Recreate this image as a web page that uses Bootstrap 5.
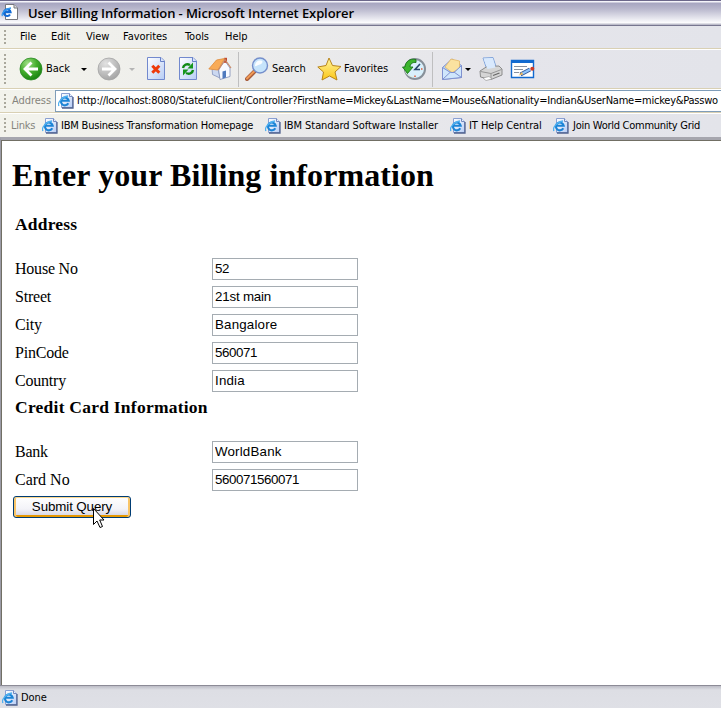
<!DOCTYPE html>
<html lang="en">
<head>
<meta charset="utf-8">
<meta name="viewport" content="width=device-width, initial-scale=1">
<title>User Billing Information - Microsoft Internet Explorer</title>
<link rel="stylesheet" href="https://cdn.jsdelivr.net/npm/bootstrap@5.3.0/dist/css/bootstrap.min.css">
<style>
  body { font: 11px/14px "DejaVu Sans Condensed", "DejaVu Sans", sans-serif; color: #000; letter-spacing: -.05px; background: #e4e5eb; }
  svg { display: block; flex: none; }
  .ie-title { height: 26px; padding-left: 1px; border-top: 1px solid #6b678a; border-bottom: 1px solid #77768f;
    background: linear-gradient(#f4f4fa 0 1px, #a6a5c0 2px, #b9b8cd 8px, #f8f8fb 21px, #fff 22px, #bdbdcb 23px); }
  .ie-title h2 { font: 600 13px/18px "Open Sans", sans-serif; letter-spacing: -.1px; padding: 3px 0 0 9px; }
  .ie-title svg { margin-top: 3px; }
  .ie-bar { background: linear-gradient(90deg, #f3f3ec, #e5e5eb 70%, #e3e4ea); white-space: nowrap; }
  .ie-bar > * { min-width: 0; }
  .ie-slots { display: grid; align-items: center; }
  .ie-menu { height: 23px; grid-template-columns: 20px 31px 35px 37px 62px 40px auto; border-bottom: 1px solid #d9d0b4; }
  .ie-tools { height: 40px; border-top: 1px solid #fff;
    grid-template-columns: 19px 27px 31px 20px 32px 17px 32px 30px 30px 7px 27px 45px 27px 58px 30px 9px 24px 14px 31px auto;
    border-bottom: 1px solid #d9d0b4; }
  .ie-address { height: 24px; border-top: 1px solid #fff; border-bottom: 1px solid #d9d0b4; grid-template-columns: 12px 43px minmax(0, 1fr); }
  .ie-links { height: 24px; border-top: 1px solid #fff; grid-template-columns: 11px 31px 19px 204px 19px 166px 19px 84px 20px auto; letter-spacing: -.2px; }
  .ie-tight { letter-spacing: -.27px; }
  .ie-loose { letter-spacing: -.07px; }
  .ie-grip { width: 2px; height: 15px; margin-left: 4px; background: repeating-linear-gradient(#aaa89c 0 2px, transparent 2px 4px); }
  .ie-tools .ie-grip { height: 31px; }
  .ie-sep { width: 1px; height: 35px; background: #bfbfc0; }
  .ie-caption { color: #85847c; }
  .ie-url { height: 22px; border: 1px solid #7f9db9; border-right: 0; background: #fff; letter-spacing: -.226px; padding-left: 2px; gap: 3px; }
  .ie-caret { width: 0; border: 3px solid transparent; border-top-color: #000; border-bottom: 0; }
  .ie-caret.ie-off { border-top-color: #b5b5b5; }
  .ie-frame { border-top: 3px solid #a6a6ae; border-left: 1px solid #9b9ba6; }
  .ie-view { height: 545px; border-top: 1px solid #716f64; border-left: 1px solid #716f64; background: #fff;
    font-family: "Liberation Serif", serif; font-size: 16px; line-height: 20px; letter-spacing: 0; padding: 17px 0 0 10px; }
  .ie-view h1 { font-size: 32px; line-height: 34px; font-weight: 700; letter-spacing: .09px; margin: 0 0 22px; }
  .ie-view h3 { font-size: 17.5px; line-height: 20px; font-weight: 700; letter-spacing: .2px; margin: 0 0 21px 3px; }
  .ie-view h3.ie-second { margin-top: 2px; letter-spacing: .24px; }
  .ie-row { height: 28px; padding-left: 3px; }
  .ie-row label { width: 197px; letter-spacing: -.22px; }
  .ie-row label.ie-even { letter-spacing: 0; }
  .ie-row input { width: 146px; height: 22px; border: 1px solid #a5acb2; border-radius: 0; padding: 0 2px 1px; color: #000;
    font: 13.333px "Liberation Sans", Arial, sans-serif; background: #fff; outline: 0; letter-spacing: .18px; }
  .ie-row input.ie-digits { letter-spacing: -.42px; }
  .ie-row input.ie-narrow { letter-spacing: -.2px; }
  .ie-submit { width: 118px; height: 22px; margin: 2px 0 0 1px; padding: 0 0 1px; border: 1px solid #003c74; border-radius: 3px;
    font: 13.333px/18px "Liberation Sans", Arial, sans-serif; letter-spacing: -.1px; color: #000;
    background: linear-gradient(#fff, #f3f3f8 60%, #cfcfe0);
    box-shadow: inset 0 1px #fdd98f, inset 2px 0 #f9c568, inset -2px 0 #f9c568, inset 0 -2px #e59700; }
  .ie-pointer { left: 80px; top: 11px; }
  .ie-status { height: 23px; border-top: 1px solid #8c8b96; padding: 2px 0 0 2px; gap: 3px;
    background: linear-gradient(#bcbcc6, #dddee4 4px, #dfe0e6); }
</style>
<script src="https://cdn.jsdelivr.net/npm/bootstrap@5.3.0/dist/js/bootstrap.bundle.min.js"></script>
</head>
<body class="vh-100 overflow-hidden d-flex flex-column">

<svg width="0" height="0" class="position-absolute" aria-hidden="true">
  <defs>
    <linearGradient id="paper" x1="0" y1="0" x2="1" y2="1"><stop offset="0" stop-color="#fff"/><stop offset="1" stop-color="#b7cdf5"/></linearGradient>
    <radialGradient id="green" cx=".35" cy=".25" r=".8"><stop offset="0" stop-color="#a0df86"/><stop offset=".5" stop-color="#45ae2d"/><stop offset="1" stop-color="#16800f"/></radialGradient>
    <radialGradient id="grey" cx=".35" cy=".25" r=".8"><stop offset="0" stop-color="#e2e2e2"/><stop offset="1" stop-color="#a3a3a3"/></radialGradient>
    <linearGradient id="gold" x1="0" y1="0" x2="0" y2="1"><stop offset="0" stop-color="#fff6a0"/><stop offset="1" stop-color="#fcc615"/></linearGradient>
    <symbol id="page-e" viewBox="0 0 16 16">
      <path d="M3.500.5H11.500L14.500 3.500V14.500H3.500Z" fill="url(#paper)" stroke="#8aa0d2"/>
      <path d="M15 4V15H4" fill="none" stroke="#50628f" stroke-width="1.300"/>
      <path d="M11.500.5V3.500H14.500" fill="#e8effc" stroke="#7589bd"/>
      <path d="M10.300 10.300A3.900 3.900 0 1 1 10.700 7.800H3.500" fill="none" stroke="#1c84d6" stroke-width="2.100"/>
      <path d="M1 13C-1 10 4 3.500 10 3" fill="none" stroke="#4fb0f0" stroke-width="1.300"/>
    </symbol>
  </defs>
</svg>

<header>
  <div class="ie-title d-flex align-items-start">
    <svg width="18" height="18" viewBox="0 0 18 18" aria-hidden="true">
      <path d="M4.500.5H13L16.500 4V15.500H4.500Z" fill="#fff" stroke="#77777d"/><path d="M13 .5V4H16.500" fill="#ddd" stroke="#77777d"/>
      <path d="M9 10.500A3.300 3.300 0 1 1 9.500 8.200H3.500" fill="none" stroke="#126ad5" stroke-width="2.200"/>
      <path d="M1.500 12C0 10 4 4.500 10 4" fill="none" stroke="#3598ee" stroke-width="1.300"/>
    </svg>
    <h2 class="mb-0">User Billing Information - Microsoft Internet Explorer</h2>
  </div>

  <nav class="ie-bar ie-slots ie-menu">
    <span class="ie-grip"></span><span>File</span><span>Edit</span><span>View</span><span>Favorites</span><span>Tools</span><span>Help</span>
  </nav>

  <div class="ie-bar ie-slots ie-tools">
    <span class="ie-grip"></span>
    <svg width="24" height="24" viewBox="0 0 24 24" aria-hidden="true"><circle cx="12" cy="12" r="11" fill="url(#green)" stroke="#2b8a24" stroke-width=".8"/><path d="M12.500 5.500 6 12l6.500 6.500M6.500 12H19" fill="none" stroke="#fff" stroke-width="2.800"/></svg>
    <span>Back</span>
    <span class="ie-caret ms-1 ps-0"></span>
    <svg width="24" height="24" viewBox="0 0 24 24" aria-hidden="true"><circle cx="12" cy="12" r="11" fill="url(#grey)" stroke="#a5a5a5" stroke-width=".8"/><path d="M11.500 5.500 18 12l-6.500 6.500M17.500 12H5" fill="none" stroke="#fff" stroke-width="2.800"/></svg>
    <span class="ie-caret ie-off"></span>
    <svg width="20" height="24" viewBox="0 0 20 24" aria-hidden="true"><path d="M1.500.5H15L18.500 4V22.500H1.500Z" fill="url(#paper)" stroke="#7289ce"/><path d="M14.500.5V4.500H18.500" fill="#dae5fb" stroke="#6780c7"/><path d="M6.300 8.800l7 7M13.300 8.800l-7 7" stroke="#ee3a0a" stroke-width="3"/></svg>
    <svg width="20" height="24" viewBox="0 0 20 24" aria-hidden="true"><path d="M1.500.5H15L18.500 4V22.500H1.500Z" fill="url(#paper)" stroke="#7289ce"/><path d="M14.500.5V4.500H18.500" fill="#dae5fb" stroke="#6780c7"/><path d="M5 11C5.500 7.500 9 6.500 12 8M15 13C14.500 16.500 11 17.500 8 16" fill="none" stroke="#108a14" stroke-width="2.400"/><path d="M15 5.500V11.500H9.500ZM5 18.500V12.500H10.500Z" fill="#16961b"/></svg>
    <svg width="24" height="24" viewBox="0 0 24 24" aria-hidden="true">
      <path d="M4 11 9 5 12 21 4.500 17.500Z" fill="#cbd8f1" stroke="#8190ba" stroke-width=".8"/>
      <path d="M10.500 12 17 4 22 11V19.500L12 22.500Z" fill="#f8faff" stroke="#7d8db8" stroke-width=".8"/>
      <path d="M16 .8h3v5h-3z" fill="#c04a32"/>
      <path d="M.8 12 8.500 3 16.500 1.500 10 13Z" fill="#f8ab58" stroke="#e08a38" stroke-width=".8"/>
      <path d="M10.500 13 17 2.500 23 11" fill="none" stroke="#c98a68" stroke-width="1.200"/>
      <path d="M14.500 14.500 18 13.500V20.500L14.500 21.700Z" fill="#4f79bd"/>
    </svg>
    <span class="ie-sep"></span>
    <svg width="24" height="24" viewBox="0 0 24 24" aria-hidden="true"><path d="M2 22 9.500 14.500" stroke="#a65b3b" stroke-width="4" stroke-linecap="round"/><path d="M2 21.500 9 14.500" stroke="#f09a55" stroke-width="2" stroke-linecap="round"/><circle cx="15" cy="8.500" r="7.500" fill="#c6e4fb" stroke="#758fcb" stroke-width="1.400"/><path d="M10 9C10 5 13 3 16 3.500 19 4 17 7 15 7.500 12 8 11 10 10 9Z" fill="#fff" opacity=".9"/></svg>
    <span>Search</span>
    <svg width="25" height="24" viewBox="0 0 25 24" aria-hidden="true"><path d="M12 1 15.500 8.500 24 9.500 18 15 20 23 12.500 19 5 23 6.500 15 .8 10 9 8.500Z" fill="url(#gold)" stroke="#b8851c" stroke-linejoin="round"/></svg>
    <span>Favorites</span>
    <svg width="24" height="24" viewBox="0 0 24 24" aria-hidden="true"><circle cx="13" cy="12" r="10" fill="#d9f0fb" stroke="#879099" stroke-width="2"/><path d="M13 4v1.500M20.500 12H19M13 20v-1.500" stroke="#e05b38" stroke-width="1.500"/><path d="M18 7 13 12.500H18" fill="none" stroke="#28466c" stroke-width="1.600"/><path d="M11 20C4 19 2.500 14 4 11" fill="none" stroke="#e2f3e1" stroke-width="1"/><path d="M14 2.500C8 1 3.500 4.500 3 10H.5L5.500 16.500 11 10H8C8 7 10.500 5 14 5.500Z" fill="#3cb52d" stroke="#19751a" stroke-width=".9"/></svg>
    <span class="ie-sep"></span>
    <svg width="23" height="24" viewBox="0 0 23 24" aria-hidden="true"><path d="M1.500 10.500 11 2 20.500 8.500V20.500L1.500 22.500Z" fill="#b4d4f7" stroke="#7f91cf" stroke-linejoin="round"/><path d="M4 10 10 2 18.500 4V12L11 15.500Z" fill="#fbe2a0" stroke="#e5b765" stroke-width=".8"/><path d="M1.500 10.500 9.500 15.500H13L20.500 8.500V20.500L1.500 22.500Z" fill="#cfe6fc" stroke="#7f91cf"/><path d="M1.500 22.500 9.500 15M20.500 20.500 13 15" stroke="#7f91cf"/></svg>
    <span class="ie-caret"></span>
    <svg width="24" height="24" viewBox="0 0 24 24" aria-hidden="true"><path d="M4 1 14 .5 17.500 11 8 13Z" fill="#d3e6fd" stroke="#82a4da"/><path d="M1 14 8 9.500 20 9 23 12V18L12 22.500 1.500 20Z" fill="#d5d5d5" stroke="#8b8b8b"/><path d="M1.500 14.500 12 16.500 22.500 12.500M12 16.500V22" fill="none" stroke="#969696"/><path d="M4.500 1.500 13.700 1 16.500 10.500 8.500 12Z" fill="#d9e9fd"/><path d="M4 21 10 19.500 13 22 7 23.500Z" fill="#fff" stroke="#999" stroke-width=".7"/><path d="M14 18.500 20.500 16" stroke="#666" stroke-width="1.300"/></svg>
    <svg width="25" height="22" viewBox="0 0 25 22" aria-hidden="true"><path d="M1.500 2.500H23.500V19.500H1.500Z" fill="#fff" stroke="#126ad0" stroke-width="1.400"/><path d="M1.500 2H23.500V5H1.500Z" fill="#126ad0"/><path d="M4 8.500H17M4 11.500H13M4 14.500H9" stroke="#8992a0"/><path d="M10.500 16.500 20 11.500" stroke="#31589a" stroke-width="4"/><path d="M12 15.700 20 11.500" stroke="#8fc4fb" stroke-width="2.300"/><path d="M8.500 17.500 12 14 13 16.500Z" fill="#f3ba5b"/><circle cx="22.300" cy="10.800" r="2" fill="#ce3b24"/></svg>
  </div>

  <div class="ie-bar ie-slots ie-address">
    <span class="ie-grip"></span>
    <span class="ie-caption">Address</span>
    <div class="ie-url d-flex align-items-center">
      <svg width="16" height="16" aria-hidden="true"><use href="#page-e"/></svg>
      <span>http://localhost:8080/StatefulClient/Controller?FirstName=Mickey&amp;LastName=Mouse&amp;Nationality=Indian&amp;UserName=mickey&amp;Passwo</span>
    </div>
  </div>

  <div class="ie-bar ie-slots ie-links">
    <span class="ie-grip"></span><span class="ie-caption ie-tight">Links</span>
    <svg width="16" height="16" aria-hidden="true"><use href="#page-e"/></svg><span>IBM Business Transformation Homepage</span>
    <svg width="16" height="16" aria-hidden="true"><use href="#page-e"/></svg><span class="ie-loose">IBM Standard Software Installer</span>
    <svg width="16" height="16" aria-hidden="true"><use href="#page-e"/></svg><span class="ie-loose">IT Help Central</span>
    <svg width="16" height="16" aria-hidden="true"><use href="#page-e"/></svg><span class="ie-tight">Join World Community Grid</span>
  </div>
</header>

<div class="ie-frame">
<main class="ie-view">
  <h1>Enter your Billing information</h1>
  <form>
    <h3>Address</h3>
    <div class="ie-row d-flex align-items-center"><label for="house">House No</label><input id="house" class="ie-digits" value="52"></div>
    <div class="ie-row d-flex align-items-center"><label for="street">Street</label><input id="street" class="ie-narrow" value="21st main"></div>
    <div class="ie-row d-flex align-items-center"><label for="city">City</label><input id="city" value="Bangalore"></div>
    <div class="ie-row d-flex align-items-center"><label for="pin">PinCode</label><input id="pin" class="ie-digits" value="560071"></div>
    <div class="ie-row d-flex align-items-center"><label for="country">Country</label><input id="country" value="India"></div>
    <h3 class="ie-second">Credit Card Information</h3>
    <div class="ie-row d-flex align-items-center"><label for="bank">Bank</label><input id="bank" value="WorldBank"></div>
    <div class="ie-row d-flex align-items-center"><label for="card" class="ie-even">Card No</label><input id="card" class="ie-digits" value="560071560071"></div>
    <div class="position-relative">
      <button type="button" class="ie-submit d-block">Submit Query</button>
      <svg class="ie-pointer position-absolute" width="13" height="22" viewBox="0 0 13 22" aria-hidden="true"><path d="M1.500 1.500V17.500L5 14 8 20.500 10.500 19.500 7.700 13H12Z" fill="#fff" stroke="#000"/></svg>
    </div>
  </form>
</main>
</div>

<footer class="ie-status d-flex align-items-center">
  <svg width="16" height="16" aria-hidden="true"><use href="#page-e"/></svg><span>Done</span>
</footer>
</body>
</html>
